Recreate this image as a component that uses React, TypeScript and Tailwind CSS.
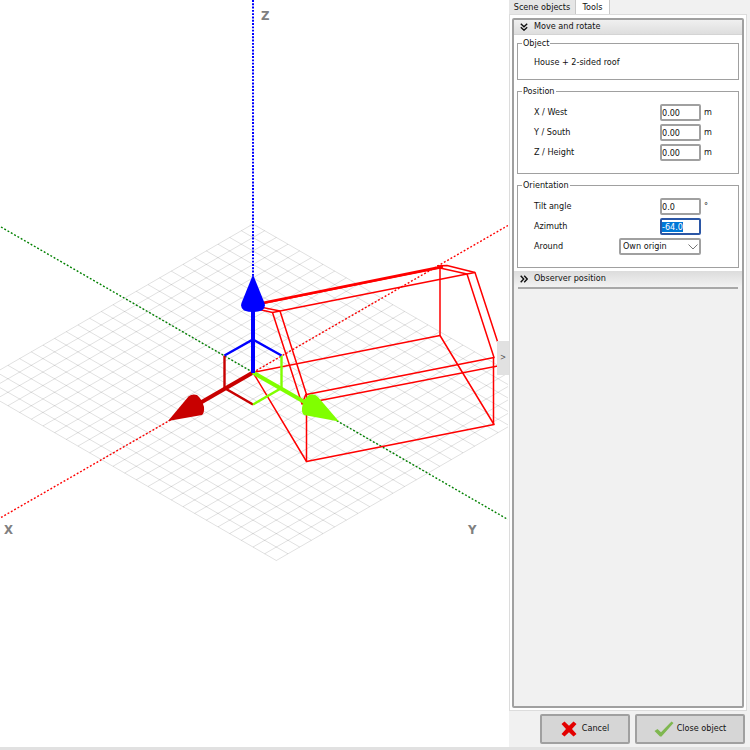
import { useEffect, useRef, useState } from "react";
import type { ReactNode } from "react";

const STEP_X = 11.67;
const STEP_Y = 6.73;
const APEX = { x: 253, y: 224 };
const COLS = 26;
const ROWS = 24;

function gridPath() {
  const parts: string[] = [];
  for (let r = 0; r <= ROWS; r++) {
    const x = APEX.x - r * STEP_X;
    const y = APEX.y + r * STEP_Y;
    parts.push(`M${x} ${y}L${x + COLS * STEP_X} ${y + COLS * STEP_Y}`);
  }
  for (let c = 0; c <= COLS; c++) {
    const x = APEX.x + c * STEP_X;
    const y = APEX.y + c * STEP_Y;
    parts.push(`M${x} ${y}L${x - ROWS * STEP_X} ${y + ROWS * STEP_Y}`);
  }
  return parts;
}

function Scene() {
  return (
    <svg width="508" height="747" viewBox="0 0 508 747" className="block shrink-0" role="img" aria-label="3D scene">
      <g stroke="#000" strokeOpacity="0.12" strokeWidth="1" fill="none">
        {gridPath().map((d) => (
          <path key={d} d={d} />
        ))}
      </g>
      <g fill="none" strokeWidth="1.4">
        <path d="M253 372.5L508 225.5" stroke="#f00" strokeDasharray="1.900 1.900" />
        <path d="M253 372.5L1 517.5" stroke="#f00" strokeDasharray="1.900 1.900" />
        <path d="M1 227L508 519.5" stroke="#008000" strokeDasharray="1.900 1.900" />
        <path d="M253 0V280" stroke="#00f" strokeWidth="2" strokeDasharray="1.900 1.400" />
      </g>
      <g stroke="#f00" strokeWidth="1.5" fill="none" strokeLinejoin="round">
        <path d="M253 372.5L440 335.5L494 424.5L306.500 461.500Z" />
        <path d="M440 335.500V267M306.500 461.500V394M493.500 424.500V357" />
        <path d="M253 305.500L440 268L467 274L494 357.500L306.500 394.500L280 311L253 305.500" />
        <path d="M253 308L272.500 312.500L302 404L524 361M302 404L306 394" />
        <path d="M437 266L447 265.500L475 272.500L498 343" />
        <path d="M280 311L467 274L475 272.500M272.500 312.500L280 311" />
        <path d="M260 303.500L443 266.500" strokeWidth="2.4" />
      </g>
      <g fill="none" strokeWidth="2.4">
        <path d="M224.500 355.500V388L253 404.500" stroke="#c80000" />
        <path d="M281.500 355.500V388L253 404.500" stroke="#80ff00" />
        <path d="M224.500 355.500L253 339.500L281.500 355.500" stroke="#00f" />
      </g>
      <path d="M253 372.500L200 403" stroke="#c80000" strokeWidth="4" />
      <path d="M168 421L188.500 396.500Q192 393.500 197 395Q202 399 204 407Q204.500 413 202 415Z" fill="#c80000" />
      <path d="M253 372.500L308 404" stroke="#80ff00" strokeWidth="4" />
      <path d="M339 421.500L318 397Q314 393 309 395Q303 399 302 408Q301.500 413 304 415Z" fill="#80ff00" />
      <path d="M253 373V308" stroke="#00f" strokeWidth="4" />
      <path d="M253 274.500L264.500 303Q266 308 262 310.500Q253 313.500 244 310.500Q240 308 241.500 303Z" fill="#00f" />
      <g className="fill-[#808080] font-bold text-[13px]">
        <text x="261" y="20">Z</text>
        <text x="4" y="534">X</text>
        <text x="468" y="534">Y</text>
      </g>
    </svg>
  );
}

function Group({ title, children }: { title: string; children: ReactNode }) {
  return (
    <fieldset className="mx-[3px] min-w-0 border border-[#a0a0a0] pr-[37px] pl-4">
      <legend className="-ml-3 h-[14px] px-px leading-[14px]">{title}</legend>
      {children}
    </fieldset>
  );
}

const fieldBox = "h-[17px] rounded-[2px] border-2 bg-white outline-none";

function NumberRow({ id, label, value, unit, active = false }: { id: string; label: string; value: string; unit: string; active?: boolean }) {
  const [text, setText] = useState(value);
  const ref = useRef<HTMLInputElement>(null);
  useEffect(() => {
    if (active) {
      ref.current?.focus();
      ref.current?.select();
    }
  }, [active]);
  return (
    <div className="flex h-[17px] items-center">
      <label htmlFor={id} className="flex-1">{label}</label>
      <div className="relative flex">
        <input
          ref={ref}
          id={id}
          value={text}
          onChange={(e) => setText(e.target.value)}
          className={`${fieldBox} w-[41px] selection:bg-[#0078d7] selection:text-white ${active ? "border-[#2b56a5]" : "border-[#a0a0a0]"}`}
        />
        <span className="absolute top-0 left-full pl-[3px] leading-[17px]">{unit}</span>
      </div>
    </div>
  );
}

function DoubleChevron({ down = false }: { down?: boolean }) {
  return (
    <svg width="8" height="8" viewBox="0 0 8 8" fill="none" stroke="#111" strokeWidth="1.4" className={down ? "rotate-90" : ""} aria-hidden="true">
      <path d="M0.700 0.800L3.700 4L0.700 7.200M4.200 0.800L7.200 4L4.200 7.200" />
    </svg>
  );
}

function SectionHeader({ title, open }: { title: string; open: boolean }) {
  return (
    <button
      type="button"
      aria-expanded={open}
      className={`flex w-full items-center gap-[6px] pl-[6px] text-left ${open ? "h-[15px] border-b border-[#d4d4d4] bg-linear-to-b from-[#f0f0f0] to-[#dedede]" : "h-4 bg-linear-to-b from-[#dcdcdc] to-[#f2f2f2]"}`}
    >
      <DoubleChevron down={open} />
      {title}
    </button>
  );
}

const actionButton =
  "flex h-[30px] items-center justify-center rounded-[2px] border-2 border-[#a0a0a0] bg-[#d6d6d6]";

export default function App() {
  const [around, setAround] = useState("Own origin");
  return (
    <div className="flex min-h-screen flex-col bg-white font-['DejaVu_Sans_Condensed','DejaVu_Sans',sans-serif] text-[9px] text-[#111]">
      <div className="flex flex-1">
        <main className="relative min-w-0 flex-1 overflow-hidden">
          <Scene />
          <button type="button" aria-label="Collapse panel" className="absolute top-[341px] right-0 h-[34px] w-3 bg-[#e1e1e1] text-[8px] text-[#555]">
            &gt;
          </button>
        </main>
        <aside className="flex w-[241px] shrink-0 flex-col bg-[#f1f1f1]">
          <div role="tablist" className="flex h-[14px] items-stretch">
            <button type="button" role="tab" aria-selected="false" className="w-[67px] border-r border-[#c8c8c8] bg-[#e6e6e6] leading-[13px]">
              Scene objects
            </button>
            <button type="button" role="tab" aria-selected="true" className="-mb-px w-[34px] border-r border-[#c8c8c8] bg-white leading-[13px]">
              Tools
            </button>
          </div>
          <div className="mr-[3px] flex flex-1 flex-col border border-[#dcdcdc] bg-white p-[2px] pt-[3px]">
            <div className="flex flex-1 flex-col rounded-[2px] border-2 border-[#a0a0a0] bg-[#f1f1f1]">
              <SectionHeader title="Move and rotate" open />
              <div className="flex flex-col gap-1 bg-white pt-px pb-[3px]">
                <Group title="Object">
                  <p className="pt-1 pb-2 leading-[17px]">House + 2-sided roof</p>
                </Group>
                <Group title="Position">
                  <div className="flex flex-col gap-[3px] pt-[6px] pb-3">
                    <NumberRow id="x" label="X / West" value="0.00" unit="m" />
                    <NumberRow id="y" label="Y / South" value="0.00" unit="m" />
                    <NumberRow id="z" label="Z / Height" value="0.00" unit="m" />
                  </div>
                </Group>
                <Group title="Orientation">
                  <div className="flex flex-col gap-[3px] pt-[6px] pb-3">
                    <NumberRow id="tilt" label="Tilt angle" value="0.0" unit="°" />
                    <NumberRow id="azimuth" label="Azimuth" value="-64.0" unit="" active />
                    <div className="flex h-[17px] items-center">
                      <label htmlFor="around" className="flex-1">Around</label>
                      <div className="relative flex">
                        <select
                          id="around"
                          value={around}
                          onChange={(e) => setAround(e.target.value)}
                          className={`${fieldBox} w-[82px] appearance-none border-[#a0a0a0] pl-[2px] leading-[13px]`}
                        >
                          <option>Own origin</option>
                          <option>Scene origin</option>
                        </select>
                        <svg width="10" height="6" viewBox="0 0 10 6" fill="none" stroke="#777" className="pointer-events-none absolute top-[6px] right-[3px]" aria-hidden="true">
                          <path d="M0.500 0.500L5 5L9.500 0.500" />
                        </svg>
                      </div>
                    </div>
                  </div>
                </Group>
              </div>
              <SectionHeader title="Observer position" open={false} />
              <hr className="mx-1 border-t-2 border-[#a8a8a8]" />
            </div>
          </div>
          <div className="flex justify-end gap-[5px] pt-[3px] pr-[5px] pb-[3px]">
            <button type="button" className={`${actionButton} w-[90px] gap-[5px]`}>
              <svg width="16" height="16" viewBox="0 0 16 16" aria-hidden="true">
                <path d="M3.500 0.500L8 4.800L12.500 0.500L15.500 3L11 8L15.500 13L12.500 15.500L8 11.200L3.500 15.500L0.500 13L5 8L0.500 3Z" fill="#e30000" />
              </svg>
              Cancel
            </button>
            <button type="button" className={`${actionButton} w-[110px] gap-[3px]`}>
              <svg width="20" height="16" viewBox="0 0 20 16" aria-hidden="true">
                <path d="M0.500 10L3.500 8L7 11.200L17.500 0.500L19.500 2L7.500 15.500H6Z" fill="#7fb750" />
              </svg>
              Close object
            </button>
          </div>
        </aside>
      </div>
      <footer className="h-[3px] bg-[#e1e1e1]" />
    </div>
  );
}
